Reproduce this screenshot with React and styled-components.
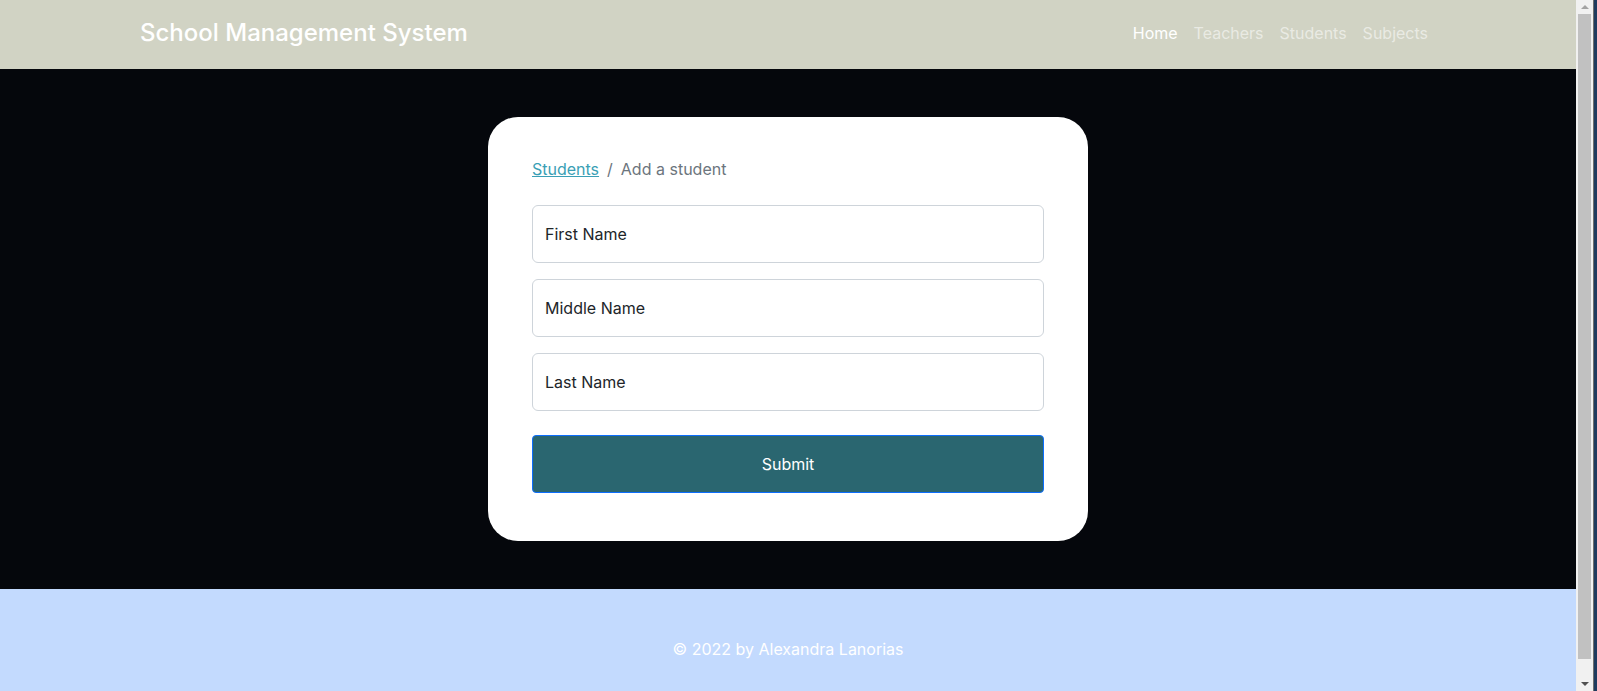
import React from "react";
import styled, { createGlobalStyle } from "styled-components";

const GlobalStyle = createGlobalStyle`
  html, body {
    margin: 0;
    padding: 0;
    overflow: hidden;
  }
  body {
    font-family: Inter, "Noto Sans", "Liberation Sans", sans-serif;
    font-size: 16px;
    line-height: 1.5;
    color: #212529;
    background: #05070c;
  }
  * {
    box-sizing: border-box;
  }
`;

// Window frame: page viewport + classic scrollbar on the right
const Frame = styled.div`
  display: flex;
  height: 100vh;
  overflow: hidden;
`;

const Viewport = styled.div`
  flex: 1;
  min-width: 0;
  overflow: hidden;
`;

const ScrollBar = styled.div`
  width: 17px;
  flex-shrink: 0;
  background: #f1f1f1;
  display: flex;
  flex-direction: column;
`;

const ScrollArrow = styled.div`
  height: 14px;
  flex-shrink: 0;
  display: flex;
  align-items: center;
  justify-content: center;

  &::after {
    content: "";
    border-left: 4px solid transparent;
    border-right: 4px solid transparent;
    ${(p) =>
      p.$down
        ? "border-top: 4px solid #505050;"
        : "border-bottom: 4px solid #a3a3a3;"}
  }
`;

const ScrollTrack = styled.div`
  flex: 1;
  padding: 0 2px 18px;
  display: flex;
`;

const ScrollThumb = styled.div`
  flex: 1;
  background: #c1c1c1;
`;

const WindowEdge = styled.div`
  width: 4px;
  flex-shrink: 0;
  border-left: 1px solid #6f6f6f;
  background: #1f3b5e;
`;

// Page
const Page = styled.div`
  display: flex;
  flex-direction: column;
`;

const Header = styled.header`
  background: #d1d3c4;
  height: 69px;
`;

const Container = styled.div`
  max-width: 1320px;
  height: 100%;
  margin: 0 auto;
  padding: 0 12px 3px;
  display: flex;
  align-items: center;
  justify-content: space-between;
`;

const Brand = styled.a`
  font-size: 24px;
  font-weight: 500;
  line-height: 1.5;
  color: #ffffff;
  text-decoration: none;
`;

const Nav = styled.nav`
  display: flex;
  align-items: center;
`;

const NavLink = styled.a`
  padding: 8px;
  font-size: 16px;
  color: ${(p) => (p.$active ? "#ffffff" : "rgba(255, 255, 255, 0.55)")};
  text-decoration: none;
`;

const Main = styled.main`
  background: #05070c;
  padding: 48px 0;
  display: flex;
  justify-content: center;
`;

const Card = styled.div`
  width: 600px;
  background: #ffffff;
  border-radius: 30px;
  padding: 40px 44px 48px;
`;

// Breadcrumb
const Crumbs = styled.ol`
  display: flex;
  list-style: none;
  margin: 0 0 24px;
  padding: 0;
  color: #6c757d;
`;

const Crumb = styled.li`
  & + &::before {
    content: "/";
    padding: 0 8px;
    color: #6c757d;
  }
`;

const CrumbLink = styled.a`
  color: #3a9fb5;
  text-decoration: underline;
`;

// Form
const Form = styled.form`
  display: flex;
  flex-direction: column;
`;

const Field = styled.div`
  height: 58px;
  margin-bottom: 16px;
  border: 1px solid #ced4da;
  border-radius: 6px;
  padding: 0 12px;
  display: flex;
  align-items: center;
  color: #212529;

  &:last-of-type {
    margin-bottom: 24px;
  }
`;

const Input = styled.input`
  border: none;
  outline: none;
  width: 100%;
  padding: 0;
  font: inherit;
  color: #212529;
  background: transparent;

  &::placeholder {
    color: #212529;
  }
`;

const SubmitButton = styled.button`
  height: 58px;
  border: 1px solid #0d6efd;
  border-radius: 4px;
  background: #2a6670;
  color: #ffffff;
  font-family: inherit;
  font-size: 16px;
  cursor: pointer;
`;

const Footer = styled.footer`
  background: #c3dafe;
  padding: 48px 0;
  text-align: center;
  color: #ffffff;
`;

const fields = ["First Name", "Middle Name", "Last Name"];

const App = () => {
  return (
    <Frame>
      <GlobalStyle />
      <Viewport>
        <Page>
          <Header>
            <Container>
              <Brand href="#">School Management System</Brand>
              <Nav>
                <NavLink href="#" $active>Home</NavLink>
                <NavLink href="#">Teachers</NavLink>
                <NavLink href="#">Students</NavLink>
                <NavLink href="#">Subjects</NavLink>
              </Nav>
            </Container>
          </Header>

          <Main>
            <Card>
              <Crumbs>
                <Crumb>
                  <CrumbLink href="#">Students</CrumbLink>
                </Crumb>
                <Crumb>Add a student</Crumb>
              </Crumbs>
              <Form onSubmit={(e) => e.preventDefault()}>
                {fields.map((name) => (
                  <Field key={name}>
                    <Input placeholder={name} />
                  </Field>
                ))}
                <SubmitButton type="submit">Submit</SubmitButton>
              </Form>
            </Card>
          </Main>

          <Footer>© 2022 by Alexandra Lanorias</Footer>
        </Page>
      </Viewport>
      <ScrollBar>
        <ScrollArrow />
        <ScrollTrack>
          <ScrollThumb />
        </ScrollTrack>
        <ScrollArrow $down />
      </ScrollBar>
      <WindowEdge />
    </Frame>
  );
};

export default App;
